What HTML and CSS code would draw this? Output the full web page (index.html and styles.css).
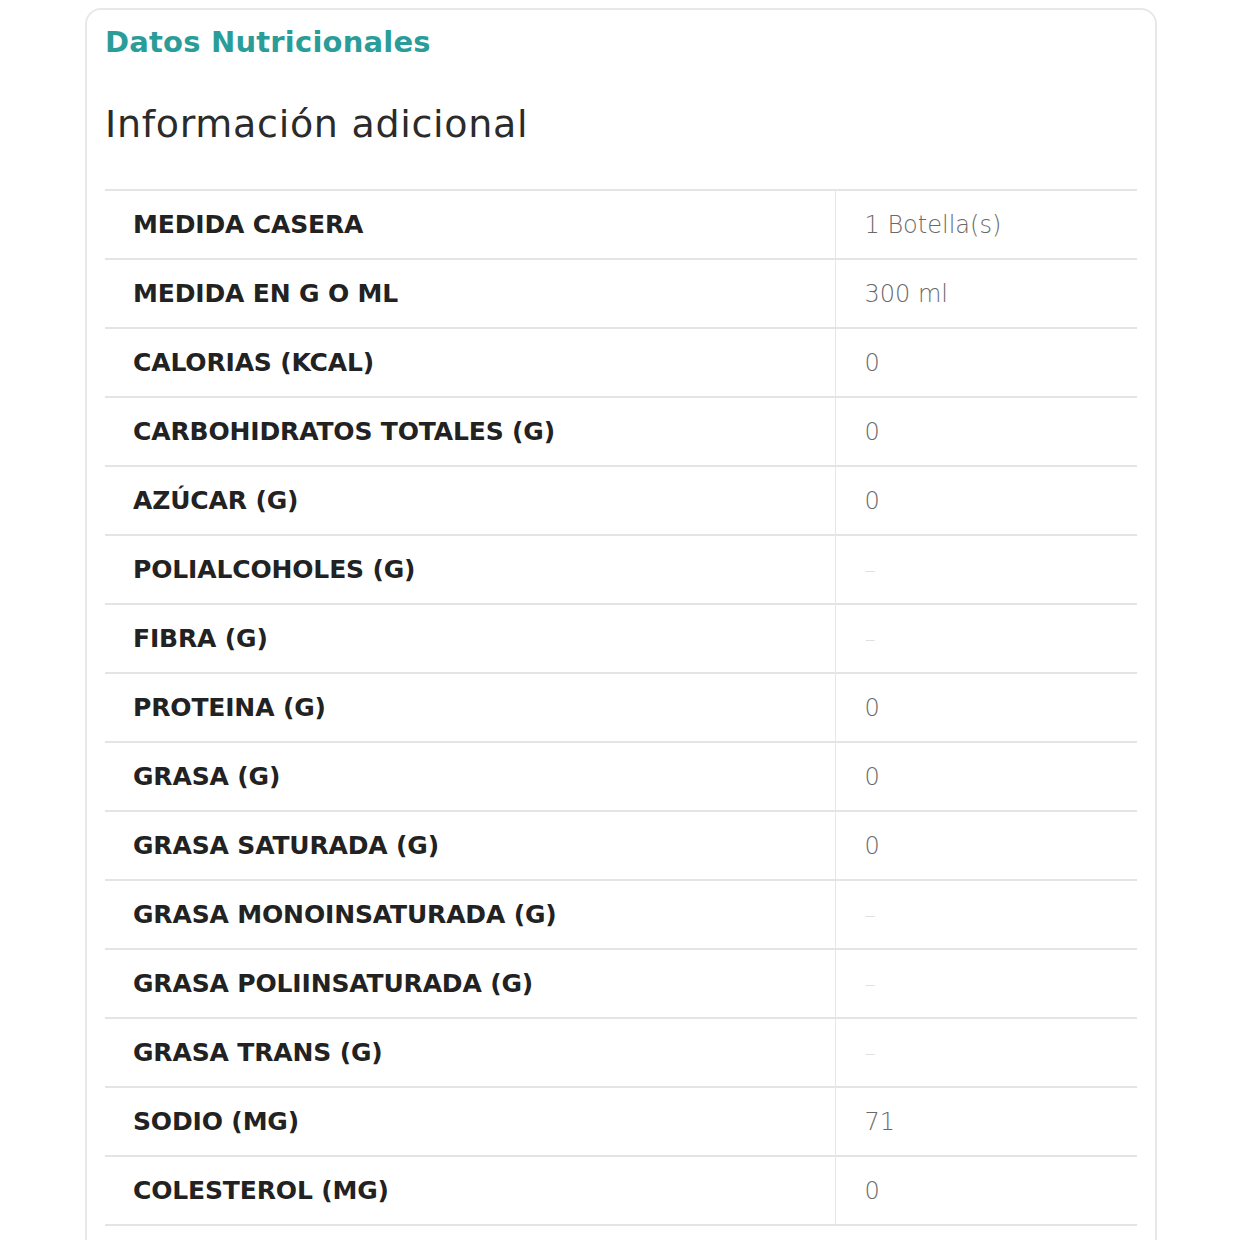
FILE: index.html
```html
<!DOCTYPE html>
<html lang="es">
<head>
<meta charset="utf-8">
<title>Datos Nutricionales</title>
<link rel="stylesheet" href="styles.css">
</head>
<body>
<section class="card">
  <h2 class="card-title">Datos Nutricionales</h2>
  <h3 class="section-title">Información adicional</h3>
  <table class="info-table">
    <tbody>
      <tr><th>MEDIDA CASERA</th><td>1 Botella(s)</td></tr>
      <tr><th>MEDIDA EN G O ML</th><td>300 ml</td></tr>
      <tr><th>CALORIAS (KCAL)</th><td>0</td></tr>
      <tr><th>CARBOHIDRATOS TOTALES (G)</th><td>0</td></tr>
      <tr><th>AZÚCAR (G)</th><td>0</td></tr>
      <tr><th>POLIALCOHOLES (G)</th><td class="empty">–</td></tr>
      <tr><th>FIBRA (G)</th><td class="empty">–</td></tr>
      <tr><th>PROTEINA (G)</th><td>0</td></tr>
      <tr><th>GRASA (G)</th><td>0</td></tr>
      <tr><th>GRASA SATURADA (G)</th><td>0</td></tr>
      <tr><th>GRASA MONOINSATURADA (G)</th><td class="empty">–</td></tr>
      <tr><th>GRASA POLIINSATURADA (G)</th><td class="empty">–</td></tr>
      <tr><th>GRASA TRANS (G)</th><td class="empty">–</td></tr>
      <tr><th>SODIO (MG)</th><td>71</td></tr>
      <tr><th>COLESTEROL (MG)</th><td>0</td></tr>
    </tbody>
  </table>
</section>
</body>
</html>
```

FILE: styles.css
```css
html, body {
  margin: 0;
  padding: 0;
  background: #ffffff;
}

body {
  font-family: "DejaVu Sans", "Liberation Sans", sans-serif;
  padding: 8px 0 0 85px;
}

.card {
  width: 1072px;
  min-height: 1300px;
  border: 2px solid #e8e8e8;
  border-radius: 16px;
  padding: 10px 18px 0 18px;
  box-sizing: border-box;
}

.card-title {
  margin: 0;
  font-size: 29px;
  font-weight: 700;
  color: #2b9d99;
  line-height: 44px;
  letter-spacing: 0.2px;
}

.section-title {
  margin: 36px 0 0 0;
  font-size: 38px;
  font-weight: 400;
  color: #2b2b2b;
  line-height: 48px;
  letter-spacing: 0.7px;
}

.info-table {
  margin-top: 41px;
  width: 1032px;
  border-collapse: collapse;
  border-top: 2px solid #e4e4e4;
}

.info-table tr {
  height: 69px;
  border-bottom: 2px solid #e4e4e4;
}

.info-table th {
  width: 730px;
  box-sizing: border-box;
  padding: 0 0 0 28px;
  text-align: left;
  font-size: 25px;
  font-weight: 700;
  color: #222222;
  border-right: 1px solid #e6e6e6;
  vertical-align: middle;
  letter-spacing: -0.15px;
}

.info-table td {
  padding: 0 0 0 29px;
  font-size: 24px;
  font-weight: 200;
  color: #6a6a6a;
  vertical-align: middle;
}

.info-table td.empty {
  color: #e0e0e0;
  font-size: 22px;
}
```
